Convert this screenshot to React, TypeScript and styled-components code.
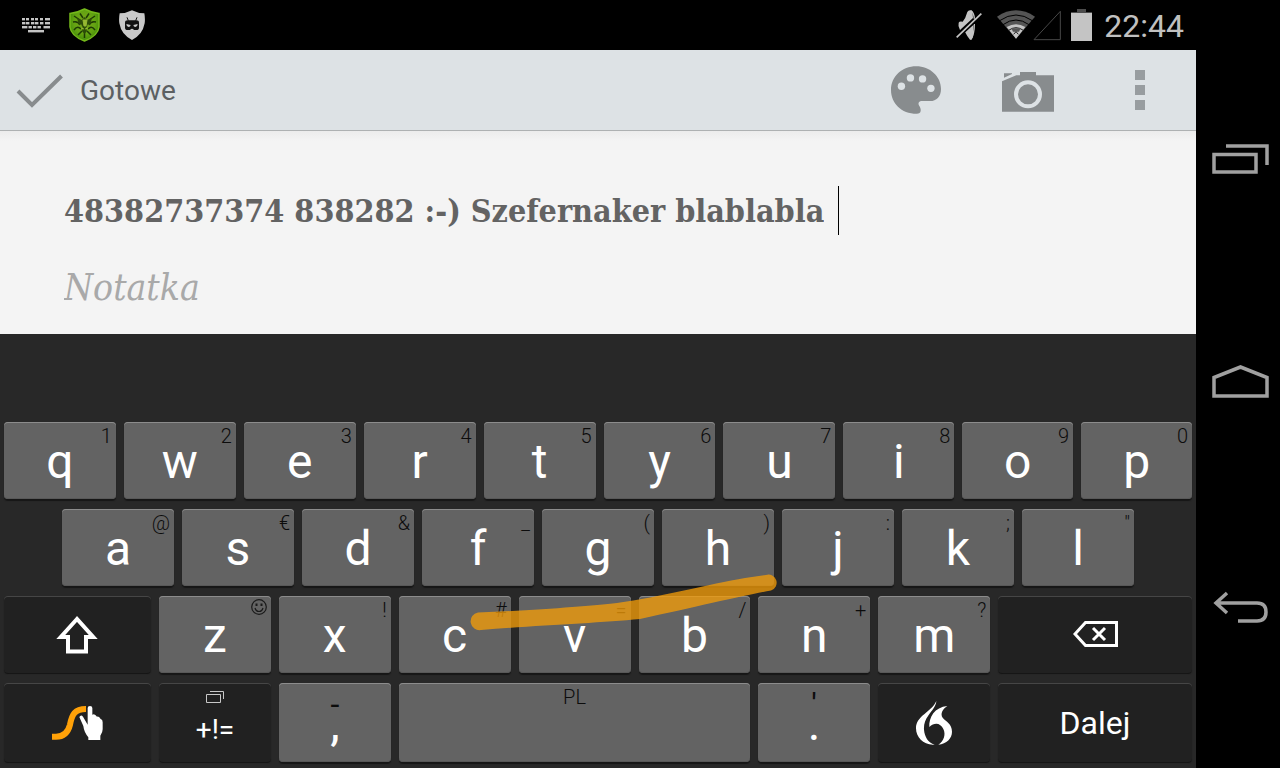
import React, { useState } from "react";
import styled, { createGlobalStyle, css } from "styled-components";

const GlobalStyle = createGlobalStyle`
  *, *::before, *::after { box-sizing: border-box; }
  body { margin: 0; background: #000; font-family: Roboto, "Liberation Sans", sans-serif; }
  button { font: inherit; color: inherit; border: 0; padding: 0; background: none; cursor: pointer; }
  svg { display: block; flex: none; }
`;

const Screen = styled.div`
  display: grid;
  grid-template-columns: minmax(0, 1fr) 84px;
  min-height: 100vh;
  background: #000;
`;

const Main = styled.div`
  display: flex;
  flex-direction: column;
`;

const StatusBar = styled.header`
  display: flex;
  align-items: center;
  justify-content: space-between;
  height: 50px;
  padding: 0 12px 0 22px;
`;

const StatusGroup = styled.div<{ $gap: number }>`
  display: flex;
  align-items: center;
  gap: ${(p) => p.$gap}px;
`;

const Clock = styled.time`
  font-size: 32px;
  line-height: 40px;
  color: #c0c0c0;
  padding: 2px 0 0 2px;
`;

const ActionBar = styled.div`
  display: flex;
  align-items: stretch;
  justify-content: space-between;
  height: 81px;
  background: #dde2e5;
  border-bottom: 1px solid #aeb1b2;
`;

const DoneButton = styled.button`
  display: flex;
  align-items: center;
  gap: 17px;
  padding: 2px 16px 0;
  font-size: 28px;
  line-height: 32px;
  color: #5c6062;
`;

const Actions = styled.div`
  display: flex;
`;

const ActionButton = styled.button`
  display: grid;
  place-items: center;
  width: 112px;
`;

const Note = styled.main`
  flex: 1;
  display: flex;
  flex-direction: column;
  gap: 29px;
  padding: 55px 64px 20px;
  background: linear-gradient(#ececec, #f4f4f4 10px);
`;

const slab = css`
  font-family: "DejaVu Serif Condensed", "DejaVu Serif", serif;
`;

const TitleRow = styled.div`
  display: flex;
  align-items: center;
  height: 49px;
`;

const TitleInput = styled.input`
  ${slab}
  field-sizing: content;
  min-width: 40px;
  max-width: 100%;
  border: 0;
  outline: 0;
  padding: 0;
  background: none;
  font-size: 32px;
  font-weight: 700;
  line-height: 48px;
  color: #636363;
`;

const Caret = styled.span`
  width: 1px;
  height: 49px;
  margin-left: 14px;
  background: #000;
`;

const BodyInput = styled.input`
  ${slab}
  width: 100%;
  border: 0;
  outline: 0;
  padding: 0;
  background: none;
  font-size: 37px;
  line-height: 48px;
  color: #636363;
  &::placeholder {
    color: #a9a9a9;
    font-style: italic;
    opacity: 1;
  }
`;

const Keyboard = styled.section`
  position: relative;
  display: flex;
  flex-direction: column;
  gap: 10px;
  padding: 88px 4px 6px;
  background: #282828;
`;

const KeyRow = styled.div<{ $inset?: boolean; $tall?: boolean }>`
  display: flex;
  gap: 8px;
  height: ${(p) => (p.$tall ? 79 : 77)}px;
  padding: 0 ${(p) => (p.$inset ? 58 : 0)}px;
`;

const Key = styled.button<{ $weight: number; $dark?: boolean; $size?: number }>`
  position: relative;
  flex: ${(p) => p.$weight} 1 0;
  min-width: 0;
  display: flex;
  flex-direction: column;
  align-items: center;
  justify-content: center;
  border-radius: 4px;
  color: #fff;
  font-size: ${(p) => p.$size ?? 48}px;
  line-height: 1;
  ${(p) =>
    p.$dark
      ? css`
          background: #212121;
          box-shadow: inset 0 1px #464646, 0 1px 1px #141414;
        `
      : css`
          padding-top: 2px;
          background: #636363;
          box-shadow: inset 0 1px #8c8c8c, inset 0 -1px #585858, 0 2px 1px #161616;
        `}
`;

const Hint = styled.span<{ $center?: boolean; $large?: boolean }>`
  position: absolute;
  top: 2px;
  right: 4px;
  font-size: 20px;
  line-height: 24px;
  font-weight: 300;
  color: #0c0c0c;
  ${(p) => p.$center && "left: 4px; text-align: center;"}
  ${(p) => p.$large && "font-size: 32px; line-height: 38px; font-weight: 400;"}
`;

const SymbolsStack = styled.span`
  flex: 1;
  display: flex;
  flex-direction: column;
  align-items: center;
  gap: 11px;
  padding-top: 8px;
  line-height: 32px;
`;

const Trace = styled.svg`
  position: absolute;
  inset: 0;
  width: 100%;
  height: 100%;
  pointer-events: none;
`;

const NavBar = styled.nav`
  display: flex;
  flex-direction: column;
  align-items: center;
  justify-content: center;
  gap: 144px;
  padding: 0 0 2px 4px;
`;

const NavButton = styled.button`
  display: grid;
  place-items: center;
  width: 80px;
  height: 80px;
`;

const KeyboardStatusIcon = () => (
  <svg width="28" height="16" viewBox="0 0 28 16" fill="#c4c4c4">
    {[0, 4, 9, 13, 18, 23].map((x) => (
      <rect key={x} x={x} y="1" width={x === 23 ? 5 : 3} height="2.4" />
    ))}
    {[0, 4, 9, 13, 18, 23].map((x) => (
      <rect key={x} x={x} y="5" width={x === 23 ? 5 : 3.4} height="2.4" />
    ))}
    {[0, 6.5, 11, 15.5, 21.5].map((x) => (
      <rect key={x} x={x} y="9" width={x === 0 ? 5.4 : x === 21.5 ? 6.5 : 3.4} height="2.4" />
    ))}
    <rect x="6" y="13" width="16" height="2.4" />
  </svg>
);

const AntivirusIcon = () => (
  <svg width="31" height="34" viewBox="0 0 31 34">
    <defs>
      <radialGradient id="leaf" cx="50%" cy="42%" r="60%">
        <stop offset="0" stopColor="#7ba51c" />
        <stop offset=".6" stopColor="#63a312" />
        <stop offset="1" stopColor="#3f8a08" />
      </radialGradient>
    </defs>
    <path d="M15.500 1Q22 4.500 30 5.500V19Q29 28 15.500 33Q2 28 1 19V5.500Q9 4.500 15.500 1Z" fill="url(#leaf)" stroke="#74b81a" strokeWidth="1.500" />
    <g fill="none" stroke="#1d3a04" strokeWidth="1.500">
      <path d="M11 5.500L14 10M20 5.500L17 10M5 8L11 12M26 8L20 12M4 14C8 13 10 15 11 17M27 14C23 13 21 15 20 17M5 22C8 18 10 19 12 21M26 22C23 18 21 19 19 21M9 27L13 23M22 27L18 23M15.500 24V30" />
    </g>
    <path d="M8 10L13 12L15.500 9L18 12L23 10L21 17L19 16L17 20L18 23L15.500 26L13 23L14 20L12 16L10 17Z" fill="#2c4d08" />
    <path d="M14 12H18L17 18H15ZM12 20L15 21M19 20L16 21" fill="#95b832" stroke="#95b832" />
  </svg>
);

const GuardIcon = () => (
  <svg width="26" height="30" viewBox="0 0 78 90">
    <path d="M39 1Q56 10 76 10Q79 26 77 40Q71 74 39 90Q7 74 1 40Q-1 26 2 10Q22 10 39 1Z" fill="#c9c9c9" />
    <path d="M24 22L28 32M54 22L50 32" stroke="#111" strokeWidth="3" />
    <path d="M18 38Q18 31 26 31H52Q60 31 60 38V53Q60 60 52 60H45Q42 56 39 56T33 60H26Q18 60 18 53Z" fill="#111" />
    <path d="M22 42L35 45Q34 51 29 51Q22 50 22 42ZM56 42L43 45Q44 51 49 51Q56 50 56 42Z" fill="#c9c9c9" />
  </svg>
);

const MutedIcon = () => (
  <svg width="26" height="30" viewBox="0 0 78 90">
    <path d="M8 38Q10 33 20 35Q29 25 34 6Q37 0 44 1L48 4Q51 12 51 24L12 60Q5 48 8 38ZM27 66L52 44V74Q50 89 42 89Q34 80 27 66Z" fill="#c4c4c4" />
    <path d="M44 2Q54 8 55 26M55 42Q55 74 44 89" fill="none" stroke="#c4c4c4" strokeWidth="4" />
    <path d="M4 86L79 15" stroke="#000" strokeWidth="5" />
    <path d="M2 82L76 11" stroke="#c4c4c4" strokeWidth="5" />
  </svg>
);

const ConnectivityIcon = () => (
  <svg width="69" height="32" viewBox="-15 0 207 96">
    <path d="M0 23Q57-15 114 23L57 89Z" fill="#555" />
    <path d="M8 35Q57 1 106 35M18 47Q57 19 96 47" fill="none" stroke="#000" strokeWidth="3" />
    <path d="M29 54Q57 38 85 54L57 89Z" fill="#c4c4c4" />
    <path d="M35 64Q57 48 79 64" fill="none" stroke="#222" strokeWidth="3" />
    <path d="M43 58H71L66 68H48Z" fill="#555" />
    <path d="M50 76L57 68L64 76" fill="none" stroke="#222" strokeWidth="3" />
    <path d="M111 92L190 7V92Z" fill="none" stroke="#484848" strokeWidth="3" />
  </svg>
);

const BatteryIcon = () => (
  <svg width="21" height="32" viewBox="0 0 21 32">
    <path d="M6 0H15V3H21V5H0V3H6Z" fill="#4c4c4c" />
    <rect y="4" width="21" height="28" fill="#c4c4c4" />
  </svg>
);

const CheckIcon = () => (
  <svg width="47" height="34" viewBox="0 0 47 34" fill="none" stroke="#888c8e" strokeWidth="4">
    <path d="M2 17L16 31L45.500 2" />
  </svg>
);

const PaletteIcon = () => (
  <svg width="50" height="48" viewBox="0 0 149 142">
    <path d="M75 0C116 0 149 30 149 68C149 91 135 104 117 104H93C84 104 79 110 84 118C91 128 91 142 77 142C30 142 0 110 0 71C0 30 33 0 75 0Z" fill="#888c8e" />
    <g fill="#dde2e5">
      <circle cx="31" cy="60" r="11" />
      <circle cx="58" cy="35" r="11" />
      <circle cx="94" cy="38" r="11" />
      <circle cx="119" cy="66" r="11" />
    </g>
  </svg>
);

const CameraIcon = () => (
  <svg width="52" height="44" viewBox="0 -12 156 132">
    <path d="M0 28L43 10H54V0H102V10H156V119H0ZM6 4H30V6L6 17Z" fill="#888c8e" />
    <circle cx="78" cy="67" r="36" fill="none" stroke="#dde2e5" strokeWidth="12" />
  </svg>
);

const MoreIcon = () => (
  <svg width="10" height="40" viewBox="0 0 10 40" fill="#989da0">
    <path d="M0 0H10V10H0ZM0 15H10V25H0ZM0 30H10V40H0Z" />
  </svg>
);

const ShiftIcon = () => (
  <svg width="42" height="38" viewBox="0 0 42 38">
    <path d="M21 3L4.800 21H12V35.500H30V21H37.200Z" fill="none" stroke="#fff" strokeWidth="4" />
  </svg>
);

const SwypeIcon = () => (
  <svg width="51" height="34" viewBox="0 0 153 102">
    <path d="M0 92H12C36 92 48 80 54 56C60 25 68 9 102 9" fill="none" stroke="#ffa108" strokeWidth="18" />
    <path d="M82 33Q87 24 93 32L107 56V6Q107 0 114 0Q121 0 121 6V26Q128 21 135 32Q141 29 146 39Q152 40 152 49V70Q152 80 145 89V102H109V94Q96 78 94 60Z" fill="#fff" />
  </svg>
);

const WindowsIcon = () => (
  <svg width="18" height="12" viewBox="0 0 18 12" fill="none" stroke="#c8c8c8">
    <path d="M.5 3.500H14.500V11.500H.5ZM4 .5H17.500V8" />
  </svg>
);

const BackspaceIcon = () => (
  <svg width="45" height="28" viewBox="0 0 45 28" fill="none" stroke="#fff" strokeWidth="3">
    <path d="M12.500 1.500H43.500V24.500H12.500L2 13Z" />
    <path d="M20 7L32 19M32 7L20 19" />
  </svg>
);

const DragonIcon = () => (
  <svg width="36" height="44" viewBox="0 0 108 132" fill="#fff">
    <path d="M61 0C60 16 48 28 38 42C27 57 23 70 24 86C26 108 36 124 56 131C24 134 0 110 0 82C0 44 46 34 61 0Z" />
    <path d="M94 15C80 24 72 38 80 50C90 62 108 68 108 92C108 112 92 128 67 131C84 120 90 100 82 84C74 66 56 62 40 78C38 50 56 18 94 15Z" />
  </svg>
);

const SmileIcon = () => (
  <svg width="16" height="16" viewBox="0 0 16 16" fill="none" stroke="#1a1a1a" strokeWidth="1.200">
    <circle cx="8" cy="8" r="7.300" />
    <path d="M4 9Q5 12.500 8 12.500T12 9" />
    <path d="M5.500 4.500V7M10.500 4.500V7" strokeWidth="2" />
  </svg>
);

const SmileSlot = styled(Hint)`
  top: 3px;
`;

const RecentsIcon = () => (
  <svg width="57" height="30" viewBox="0 0 57 30" fill="none" stroke="#a0a0a0" strokeWidth="3.500">
    <path d="M2 10.500H44V28H2ZM14 2H55V21" />
  </svg>
);

const HomeIcon = () => (
  <svg width="57" height="36" viewBox="0 0 57 36" fill="none" stroke="#a0a0a0" strokeWidth="3.500">
    <path d="M2 31V12.500L28.500 2L55 12.500V31Z" />
  </svg>
);

const BackIcon = () => (
  <svg width="57" height="32" viewBox="0 0 57 32" fill="none" stroke="#a0a0a0" strokeWidth="3.500">
    <path d="M4 12H45Q54 12 54 21T45 30H26M15 2L4 12L15 22" />
  </svg>
);

type KeyDef = [letter: string, hint: string];

const topRow: KeyDef[] = [
  ["q", "1"], ["w", "2"], ["e", "3"], ["r", "4"], ["t", "5"], ["y", "6"], ["u", "7"],
];
const topRowEnd: KeyDef[] = [["i", "8"], ["o", "9"], ["p", "0"]];
const homeRow: KeyDef[] = [
  ["a", "@"], ["s", "€"], ["d", "&"], ["f", "_"], ["g", "("],
  ["h", ")"], ["j", ":"], ["k", ";"], ["l", '"'],
];
const bottomRow: KeyDef[] = [
  ["z", ""], ["x", "!"], ["c", "#"], ["v", "="], ["b", "/"], ["n", "+"], ["m", "?"],
];

const LetterKeys = ({ keys, weight = 112 }: { keys: KeyDef[]; weight?: number }) => (
  <>
    {keys.map(([letter, hint]) => (
      <Key key={letter} $weight={weight}>
        {hint ? <Hint>{hint}</Hint> : <SmileSlot><SmileIcon /></SmileSlot>}
        {letter}
      </Key>
    ))}
  </>
);

export default function App() {
  const [title, setTitle] = useState("48382737374 838282 :-) Szefernaker blablabla");
  const [body, setBody] = useState("");

  return (
    <Screen>
      <GlobalStyle />
      <Main>
        <StatusBar>
          <StatusGroup $gap={19}>
            <KeyboardStatusIcon />
            <AntivirusIcon />
            <GuardIcon />
          </StatusGroup>
          <StatusGroup $gap={10}>
            <MutedIcon />
            <ConnectivityIcon />
            <BatteryIcon />
            <Clock>22:44</Clock>
          </StatusGroup>
        </StatusBar>

        <ActionBar>
          <DoneButton>
            <CheckIcon />
            Gotowe
          </DoneButton>
          <Actions>
            <ActionButton aria-label="Kolor"><PaletteIcon /></ActionButton>
            <ActionButton aria-label="Aparat"><CameraIcon /></ActionButton>
            <ActionButton aria-label="Więcej opcji"><MoreIcon /></ActionButton>
          </Actions>
        </ActionBar>

        <Note>
          <TitleRow>
            <TitleInput aria-label="Tytuł" value={title} onChange={(e) => setTitle(e.target.value)} />
            <Caret />
          </TitleRow>
          <BodyInput aria-label="Notatka" placeholder="Notatka" value={body} onChange={(e) => setBody(e.target.value)} />
        </Note>

        <Keyboard aria-label="Klawiatura">
          <KeyRow>
            <LetterKeys keys={topRow} />
            <LetterKeys keys={topRowEnd} weight={111} />
          </KeyRow>
          <KeyRow $inset>
            <LetterKeys keys={homeRow} />
          </KeyRow>
          <KeyRow>
            <Key $weight={147} $dark aria-label="Shift"><ShiftIcon /></Key>
            <LetterKeys keys={bottomRow} />
            <Key $weight={194} $dark aria-label="Usuń"><BackspaceIcon /></Key>
          </KeyRow>
          <KeyRow $tall>
            <Key $weight={147} $dark aria-label="Swype"><SwypeIcon /></Key>
            <Key $weight={112} $dark $size={28}>
              <SymbolsStack>
                <WindowsIcon />
                +!=
              </SymbolsStack>
            </Key>
            <Key $weight={112}><Hint $center $large>-</Hint>,</Key>
            <Key $weight={351} aria-label="Spacja"><Hint $center>PL</Hint></Key>
            <Key $weight={112}><Hint $center $large>'</Hint>.</Key>
            <Key $weight={112} $dark aria-label="Dyktowanie"><DragonIcon /></Key>
            <Key $weight={194} $dark $size={32}>Dalej</Key>
          </KeyRow>
          <Trace viewBox="0 0 1196 434" preserveAspectRatio="none">
            <path
              d="M478 278.500C540 276 590 272 617 269C660 263 710 250 745 244L766 241A7.700 7.700 0 0 1 771 256.500C745 261 700 272 640 285C600 289 540 291 481 296A8.600 8.600 0 0 1 478 278.500Z"
              fill="#f69e08"
              fillOpacity=".76"
            />
          </Trace>
        </Keyboard>
      </Main>

      <NavBar>
        <NavButton aria-label="Ostatnie"><RecentsIcon /></NavButton>
        <NavButton aria-label="Ekran główny"><HomeIcon /></NavButton>
        <NavButton aria-label="Wstecz"><BackIcon /></NavButton>
      </NavBar>
    </Screen>
  );
}
